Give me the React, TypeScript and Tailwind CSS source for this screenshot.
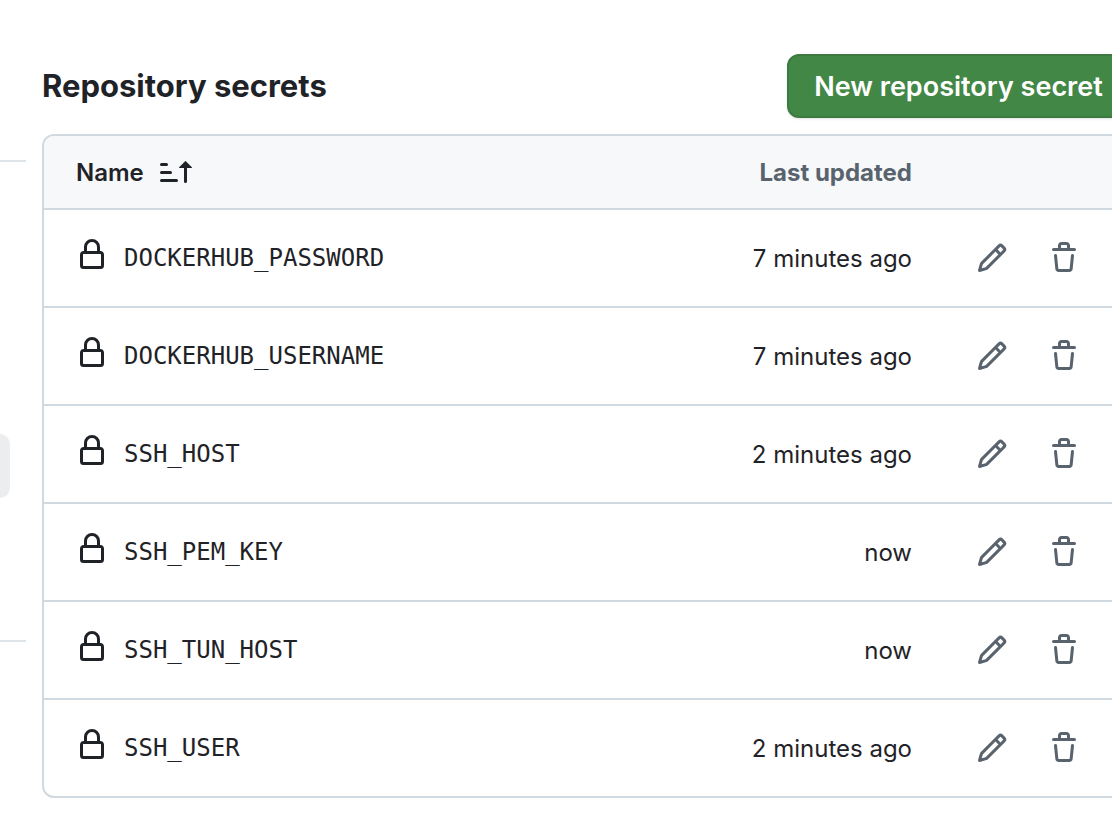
type IconProps = { path: string; className?: string };

const LOCK =
  "M4 4a4 4 0 0 1 8 0v2h.25c.966 0 1.75.784 1.75 1.75v5.5A1.75 1.75 0 0 1 12.25 15h-8.5A1.75 1.75 0 0 1 2 13.25v-5.5C2 6.784 2.784 6 3.75 6H4Zm8.25 3.5h-8.5a.25.25 0 0 0-.25.25v5.5c0 .138.112.25.25.25h8.5a.25.25 0 0 0 .25-.25v-5.5a.25.25 0 0 0-.25-.25ZM10.5 6V4a2.5 2.5 0 1 0-5 0v2Z";
const PENCIL =
  "M11.013 1.427a1.75 1.75 0 0 1 2.474 0l1.086 1.086a1.75 1.75 0 0 1 0 2.474l-8.61 8.61c-.21.21-.47.364-.756.445l-3.251.93a.75.75 0 0 1-.927-.928l.929-3.25c.081-.286.235-.547.445-.758l8.61-8.61Zm.176 4.823L9.75 4.81l-6.286 6.287a.253.253 0 0 0-.064.108l-.558 1.953 1.953-.558a.253.253 0 0 0 .108-.064Zm1.238-3.763a.25.25 0 0 0-.354 0L10.811 3.75l1.439 1.44 1.263-1.263a.25.25 0 0 0 0-.354Z";
const TRASH =
  "M11 1.75V3h2.25a.75.75 0 0 1 0 1.5H2.75a.75.75 0 0 1 0-1.5H5V1.75C5 .784 5.784 0 6.75 0h2.5C10.216 0 11 .784 11 1.75ZM4.496 6.675l.66 6.6a.25.25 0 0 0 .249.225h5.19a.25.25 0 0 0 .249-.225l.66-6.6a.75.75 0 0 1 1.492.149l-.66 6.6A1.748 1.748 0 0 1 10.595 15h-5.19a1.75 1.75 0 0 1-1.741-1.575l-.66-6.6a.75.75 0 1 1 1.492-.15ZM6.5 1.75V3h3V1.75a.25.25 0 0 0-.25-.25h-2.5a.25.25 0 0 0-.25.25Z";
const SORT_ASC =
  "m12.927 2.573 3 3A.25.25 0 0 1 15.75 6H13.5v6.75a.75.75 0 0 1-1.5 0V6H9.75a.25.25 0 0 1-.177-.427l3-3a.25.25 0 0 1 .354 0ZM0 12.25a.75.75 0 0 1 .75-.75h7.5a.75.75 0 0 1 0 1.5H.75a.75.75 0 0 1-.75-.75Zm0-4a.75.75 0 0 1 .75-.75h4.5a.75.75 0 0 1 0 1.5H.75a.75.75 0 0 1-.75-.75Zm0-4a.75.75 0 0 1 .75-.75h2.5a.75.75 0 0 1 0 1.5H.75a.75.75 0 0 1-.75-.75Z";

function Icon({ path, className = "" }: IconProps) {
  return (
    <svg viewBox="0 0 16 16" fill="currentColor" aria-hidden="true" className={`size-8 shrink-0 ${className}`}>
      <path d={path} />
    </svg>
  );
}

const secrets = [
  { name: "DOCKERHUB_PASSWORD", updated: "7 minutes ago" },
  { name: "DOCKERHUB_USERNAME", updated: "7 minutes ago" },
  { name: "SSH_HOST", updated: "2 minutes ago" },
  { name: "SSH_PEM_KEY", updated: "now" },
  { name: "SSH_TUN_HOST", updated: "now" },
  { name: "SSH_USER", updated: "2 minutes ago" },
];

function IconButton({ label, path }: { label: string; path: string }) {
  return (
    <button type="button" aria-label={label} className="grid size-16 place-items-center rounded-xl text-[#59636e]">
      <Icon path={path} />
    </button>
  );
}

export default function App() {
  return (
    <div className="flex min-h-screen overflow-hidden bg-white font-['Inter','Liberation_Sans',sans-serif] text-[#1f2328]">
      <aside className="w-[42px] shrink-0 pt-40">
        <hr className="mr-4 border-t-2 border-[#dfe4e9]" />
        <div className="mt-[272px] mr-8 h-16 rounded-r-xl bg-[#ecedef]" />
        <hr className="mt-[142px] mr-4 border-t-2 border-[#dfe4e9]" />
      </aside>

      <main className="-mr-[18px] min-w-0 flex-1 pt-[54px] pb-9">
        <header className="mb-4 flex items-center justify-between">
          <h2 className="text-[31px] leading-[48px] font-bold">Repository secrets</h2>
          <button
            type="button"
            className="h-16 min-w-[343px] rounded-xl border-2 border-[#3c7a3f] bg-[#428745] px-6 pt-0.5 text-[27px] font-semibold whitespace-nowrap text-white shadow-sm"
          >
            New repository secret
          </button>
        </header>

        <div className="overflow-hidden rounded-xl border-2 border-[#d1d9e0]">
          <table className="w-full border-separate border-spacing-0 text-2xl">
            <thead className="bg-[#f6f8fa]">
              <tr className="h-[74px]">
                <th scope="col" aria-sort="ascending" className="border-b-2 border-[#d1d9e0] pl-8 text-left font-semibold">
                  <button type="button" className="flex items-center gap-4">
                    <span className="pt-0.5">Name</span>
                    <Icon path={SORT_ASC} />
                  </button>
                </th>
                <th scope="col" className="border-b-2 border-[#d1d9e0] pt-0.5 text-right font-bold text-[#59636e]">
                  Last updated
                </th>
                <th scope="col" aria-label="Actions" className="border-b-2 border-[#d1d9e0]" />
              </tr>
            </thead>
            <tbody className="[&>tr:last-child]:h-24 [&>tr:last-child>td]:border-b-0">
              {secrets.map((secret) => (
                <tr key={secret.name} className="h-[98px]">
                  <td className="border-b-2 border-[#d1d9e0] pl-8">
                    <div className="flex items-center gap-4">
                      <Icon path={LOCK} className="mb-1.5" />
                      <code className="font-['DejaVu_Sans_Mono',monospace]">{secret.name}</code>
                    </div>
                  </td>
                  <td className="border-b-2 border-[#d1d9e0] pt-0.5 text-right whitespace-nowrap">{secret.updated}</td>
                  <td className="w-0 border-b-2 border-[#d1d9e0] pr-8 pl-12">
                    <div className="flex gap-2">
                      <IconButton label={`Edit ${secret.name}`} path={PENCIL} />
                      <IconButton label={`Delete ${secret.name}`} path={TRASH} />
                    </div>
                  </td>
                </tr>
              ))}
            </tbody>
          </table>
        </div>
      </main>
    </div>
  );
}
